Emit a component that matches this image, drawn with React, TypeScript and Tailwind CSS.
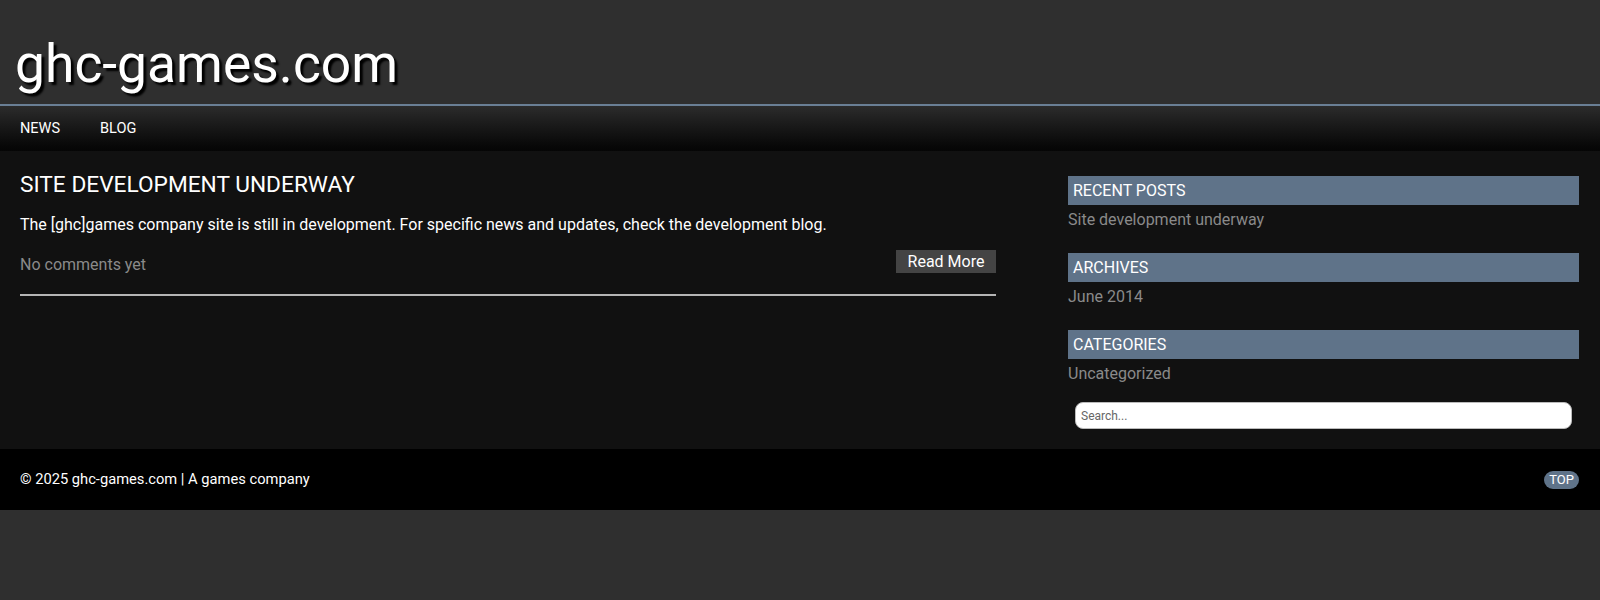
import React from 'react';

const font = { fontFamily: 'Roboto, "Liberation Sans", sans-serif' };

const Widget: React.FC<{ title: string; children: React.ReactNode }> = ({ title, children }) => (
  <div className="mb-[21.5px]">
    <h3 className="h-[29px] bg-[#5f7389] pl-[5px] text-[16px] leading-[29px] text-white">{title}</h3>
    <p className="mt-[2.5px] text-[16px] leading-[24px] text-[#8a8a8a]">{children}</p>
  </div>
);

export default function App() {
  return (
    <div className="min-h-[600px] bg-[#2f2f2f]" style={font}>
      {/* Header */}
      <header className="h-[106px] border-b-2 border-[#6a7f95] bg-[#2f2f2f] px-[15px] pt-[32px]">
        <h1 className="text-[53.4px] leading-[64px] text-white [text-shadow:3px_3px_2px_#000]">ghc-games.com</h1>
      </header>

      {/* Nav */}
      <nav className="flex h-[45px] items-center gap-[40px] bg-gradient-to-b from-[#2c2c2c] to-[#050505] px-5 text-[14.5px] uppercase text-white">
        <a>News</a>
        <a>Blog</a>
      </nav>

      {/* Main */}
      <main className="flex bg-[#111111] pl-5 pr-[21px] pt-[20px] pb-[20px]">
        <article className="w-[976px]">
          <h2 className="text-[22.7px] leading-[28px] text-white">SITE DEVELOPMENT UNDERWAY</h2>
          <p className="mt-[16px] text-[16px] leading-[20px] text-white">
            The [ghc]games company site is still in development. For specific news and updates, check the development blog.
          </p>
          <div className="mt-[15px] flex items-start justify-between border-b-2 border-[#b5b5b5] pb-[19px]">
            <span className="mt-[5px] text-[16px] leading-[20px] text-[#8a8a8a]">No comments yet</span>
            <button className="h-[23px] w-[100px] bg-[#444444] text-[16px] leading-[23px] text-white">Read More</button>
          </div>
        </article>

        <aside className="ml-[72px] flex-1 pt-[5px]">
          <Widget title="RECENT POSTS">Site development underway</Widget>
          <Widget title="ARCHIVES">June 2014</Widget>
          <Widget title="CATEGORIES">Uncategorized</Widget>
          <div className="-mt-[5px] px-[7px]">
            <input
              className="h-[27px] w-full rounded-[8px] border border-[#bbb] bg-white px-[5px] text-[12px] text-black placeholder-[#666] outline-none"
              placeholder="Search..."
              style={font}
            />
          </div>
        </aside>
      </main>

      {/* Footer */}
      <footer className="flex h-[61px] items-center justify-between bg-black pl-5 pr-[21px]">
        <span className="text-[14.7px] text-white">© 2025 ghc-games.com | A games company</span>
        <span className="rounded-full bg-[#5f7389] px-[5px] text-[13px] leading-[18px] text-white">TOP</span>
      </footer>
    </div>
  );
}
